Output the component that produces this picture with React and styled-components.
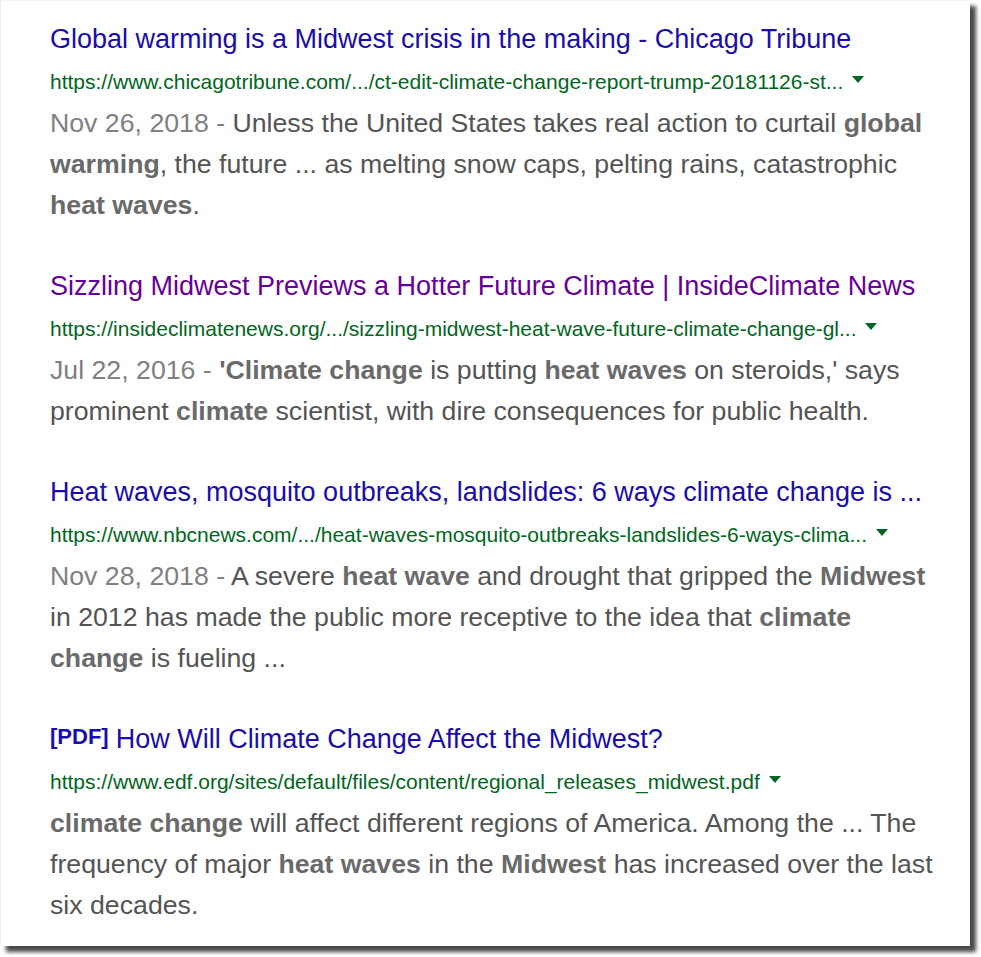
import React from "react";
import styled, { createGlobalStyle } from "styled-components";

const Global = createGlobalStyle`
  html, body { margin: 0; padding: 0; background: #ffffff; }
  body { font-family: "Liberation Sans", Arial, sans-serif; }
`;

const Page = styled.div`
  min-height: 957px;
  padding-bottom: 11px;
  box-sizing: border-box;
`;

const Card = styled.div`
  box-sizing: border-box;
  width: 970px;
  height: 946px;
  background: #ffffff;
  border-left: 1px solid #eeeeee;
  border-top: 1px solid #f2f2f2;
  box-shadow: 6px 6px 4px rgba(0, 0, 0, 0.72);
  padding: 17px 20px 0 49px;
  display: flex;
  flex-direction: column;
  gap: 39px;
`;

const Result = styled.div`
  display: flex;
  flex-direction: column;
  width: 900px;
`;

const Title = styled.div`
  display: flex;
  align-items: flex-start;
  font-size: 27px;
  line-height: 42px;
  height: 42px;
  white-space: nowrap;
  color: ${(p) => (p.$visited ? "#660099" : "#1a0dab")};
`;

const FileTag = styled.span`
  font-size: 22px;
  line-height: 38px;
  font-weight: bold;
  color: #1a0dab;
  margin-right: 7px;
`;

const UrlRow = styled.div`
  display: flex;
  align-items: center;
  height: 43px;
  padding-top: 1px;
  box-sizing: border-box;
  font-size: 21px;
  color: #006621;
  white-space: nowrap;
`;

const Arrow = styled.span`
  display: inline-block;
  width: 0;
  height: 0;
  margin-left: 9px;
  margin-top: -5px;
  border-left: 6px solid transparent;
  border-right: 6px solid transparent;
  border-top: 7px solid #006621;
`;

const Snippet = styled.div`
  font-size: 26.7px;
  line-height: 41px;
  color: #545454;
`;

const DateText = styled.span`
  color: #808080;
`;

const Em = styled.b`
  color: #6a6a6a;
  font-weight: bold;
`;

export default function App() {
  return (
    <Page>
      <Global />
      <Card>
        <Result>
          <Title>Global warming is a Midwest crisis in the making - Chicago Tribune</Title>
          <UrlRow>
            https://www.chicagotribune.com/.../ct-edit-climate-change-report-trump-20181126-st...
            <Arrow />
          </UrlRow>
          <Snippet>
            <DateText>Nov 26, 2018 - </DateText>Unless the United States takes real action to curtail{" "}
            <Em>global warming</Em>, the future ... as melting snow caps, pelting rains, catastrophic{" "}
            <Em>heat waves</Em>.
          </Snippet>
        </Result>
        <Result>
          <Title $visited>Sizzling Midwest Previews a Hotter Future Climate | InsideClimate News</Title>
          <UrlRow>
            https://insideclimatenews.org/.../sizzling-midwest-heat-wave-future-climate-change-gl...
            <Arrow />
          </UrlRow>
          <Snippet>
            <DateText>Jul 22, 2016 - </DateText>
            <Em>'Climate change</Em> is putting <Em>heat waves</Em> on steroids,' says prominent{" "}
            <Em>climate</Em> scientist, with dire consequences for public health.
          </Snippet>
        </Result>
        <Result>
          <Title>Heat waves, mosquito outbreaks, landslides: 6 ways climate change is ...</Title>
          <UrlRow>
            https://www.nbcnews.com/.../heat-waves-mosquito-outbreaks-landslides-6-ways-clima...
            <Arrow />
          </UrlRow>
          <Snippet>
            <DateText>Nov 28, 2018 - </DateText>A severe <Em>heat wave</Em> and drought that gripped the{" "}
            <Em>Midwest</Em> in 2012 has made the public more receptive to the idea that{" "}
            <Em>climate change</Em> is fueling ...
          </Snippet>
        </Result>
        <Result>
          <Title>
            <FileTag>[PDF]</FileTag>
            <span>How Will Climate Change Affect the Midwest?</span>
          </Title>
          <UrlRow>
            https://www.edf.org/sites/default/files/content/regional_releases_midwest.pdf
            <Arrow />
          </UrlRow>
          <Snippet>
            <Em>climate change</Em> will affect different regions of America. Among the ... The frequency of
            major <Em>heat waves</Em> in the <Em>Midwest</Em> has increased over the last six decades.
          </Snippet>
        </Result>
      </Card>
    </Page>
  );
}
